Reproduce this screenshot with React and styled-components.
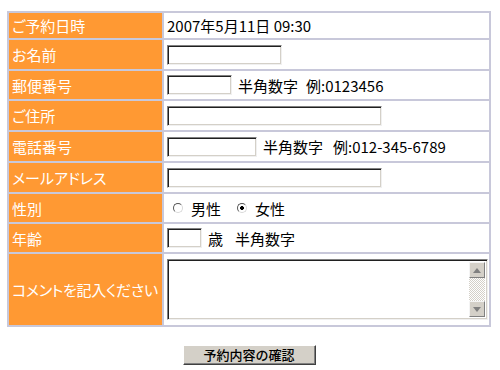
import React from 'react'
import styled, { createGlobalStyle, css } from 'styled-components'

const GlobalStyle = createGlobalStyle`
  html, body {
    margin: 0;
    padding: 0;
    background: #fff;
  }
  body {
    font-family: "Noto Sans CJK JP", "Liberation Sans", sans-serif;
    color: #000;
  }
`

const Page = styled.div`
  width: 500px;
  padding: 11px 0 0 7px;
  box-sizing: border-box;
`

const Form = styled.form`
  display: flex;
  flex-direction: column;
  align-items: center;
  width: 484px;
`

const Table = styled.table`
  width: 484px;
  border-collapse: collapse;
  table-layout: fixed;
  border: 2px solid #c8c8da;
`

const Row = styled.tr`
  height: ${(p) => p.$h}px;
`

const Label = styled.th`
  width: 150px;
  background: #ff9933;
  color: #fff;
  font-size: 15px;
  font-weight: normal;
  text-align: left;
  padding: 0 0 0 3px;
  border: 2px solid #c8c8da;
  white-space: nowrap;
  font-feature-settings: "palt";
  letter-spacing: ${(p) => (p.$tight ? '-0.3px' : '0')};
`

const Value = styled.td`
  background: #fff;
  font-size: 15px;
  padding: 0 0 0 3px;
  border: 2px solid #c8c8da;
  white-space: nowrap;
`

const Line = styled.div`
  display: flex;
  align-items: center;
  gap: ${(p) => p.$gap || 6}px;
`

const sunken = css`
  box-sizing: border-box;
  border: 1px solid;
  border-color: #808080 #f0f0f0 #f0f0f0 #808080;
  box-shadow: inset 1px 1px 0 #202020, inset -1px -1px 0 #d4d0c8;
  background: #fff;
`

const Field = styled.input`
  ${sunken};
  width: ${(p) => p.$w}px;
  height: 20px;
  margin: 0;
  padding: 0 3px;
  font: inherit;
  font-size: 13px;
  outline: none;
`

const Hint = styled.span`
  margin-left: ${(p) => p.$ml || 0}px;
`

const Radio = styled.input.attrs({ type: 'radio' })`
  appearance: none;
  width: 10px;
  height: 10px;
  margin: 0 0 0 6px;
  border-radius: 50%;
  border: 1px solid;
  border-color: #555 #d8d8d8 #d8d8d8 #555;
  background: #fff;
  &:checked {
    background: radial-gradient(circle, #000 0 1.6px, #fff 2.2px);
  }
`

const RadioLabel = styled.label`
  display: flex;
  align-items: center;
  gap: 8px;
`

const Memo = styled.div`
  ${sunken};
  display: flex;
  width: 321px;
  height: 61px;
  padding: 2px;
`

const MemoText = styled.textarea`
  flex: 1;
  border: none;
  resize: none;
  outline: none;
  overflow: hidden;
  font: inherit;
  font-size: 13px;
  padding: 1px 2px;
`

const ScrollBar = styled.div`
  width: 16px;
  display: flex;
  flex-direction: column;
`

const ScrollButton = styled.div`
  width: 16px;
  height: 16px;
  box-sizing: border-box;
  background: #d4d0c8;
  border: 1px solid;
  border-color: #f4f4f4 #808080 #808080 #f4f4f4;
  display: flex;
  align-items: center;
  justify-content: center;
`

const Track = styled.div`
  flex: 1;
  background-color: #fff;
  background-image: repeating-conic-gradient(#d4d0c8 0 25%, #fff 0 50%);
  background-size: 2px 2px;
`

const Submit = styled.button`
  margin-top: 18px;
  width: 133px;
  height: 20px;
  padding: 0;
  background: #d4d0c8;
  border: 1px solid;
  border-color: #fff #404040 #404040 #fff;
  box-shadow: inset -1px -1px 0 #808080;
  font-family: "Noto Sans CJK JP", sans-serif;
  font-size: 13px;
  font-weight: 500;
  color: #000;
  line-height: 16px;
`

const Arrow = ({ up }) => (
  <svg width='8' height='5' viewBox='0 0 8 5'>
    <polygon points={up ? '0,5 8,5 4,0' : '0,0 8,0 4,5'} fill='#808080' />
  </svg>
)

const App = () => (
  <Page>
    <GlobalStyle />
    <Form onSubmit={(e) => e.preventDefault()}>
      <Table>
        <tbody>
          <Row $h={27}>
            <Label>ご予約日時</Label>
            <Value>2007年5月11日 09:30</Value>
          </Row>
          <Row $h={31}>
            <Label>お名前</Label>
            <Value>
              <Field $w={115} />
            </Value>
          </Row>
          <Row $h={30}>
            <Label>郵便番号</Label>
            <Value>
              <Line>
                <Field $w={65} />
                <span>半角数字</span>
                <Hint $ml={2}>例:0123456</Hint>
              </Line>
            </Value>
          </Row>
          <Row $h={31}>
            <Label>ご住所</Label>
            <Value>
              <Field $w={215} />
            </Value>
          </Row>
          <Row $h={31}>
            <Label>電話番号</Label>
            <Value>
              <Line>
                <Field $w={90} />
                <span>半角数字</span>
                <Hint $ml={4}>例:012-345-6789</Hint>
              </Line>
            </Value>
          </Row>
          <Row $h={31}>
            <Label>メールアドレス</Label>
            <Value>
              <Field $w={215} />
            </Value>
          </Row>
          <Row $h={30}>
            <Label>性別</Label>
            <Value>
              <Line $gap={10}>
                <RadioLabel>
                  <Radio name='sex' />
                  男性
                </RadioLabel>
                <RadioLabel>
                  <Radio name='sex' defaultChecked />
                  女性
                </RadioLabel>
              </Line>
            </Value>
          </Row>
          <Row $h={30}>
            <Label>年齢</Label>
            <Value>
              <Line>
                <Field $w={35} />
                <span>歳</span>
                <Hint $ml={6}>半角数字</Hint>
              </Line>
            </Value>
          </Row>
          <Row $h={73}>
            <Label $tight>コメントを記入ください</Label>
            <Value>
              <Memo>
                <MemoText />
                <ScrollBar>
                  <ScrollButton>
                    <Arrow up />
                  </ScrollButton>
                  <Track />
                  <ScrollButton>
                    <Arrow />
                  </ScrollButton>
                </ScrollBar>
              </Memo>
            </Value>
          </Row>
        </tbody>
      </Table>
      <Submit type='submit'>予約内容の確認</Submit>
    </Form>
  </Page>
)

export default App
